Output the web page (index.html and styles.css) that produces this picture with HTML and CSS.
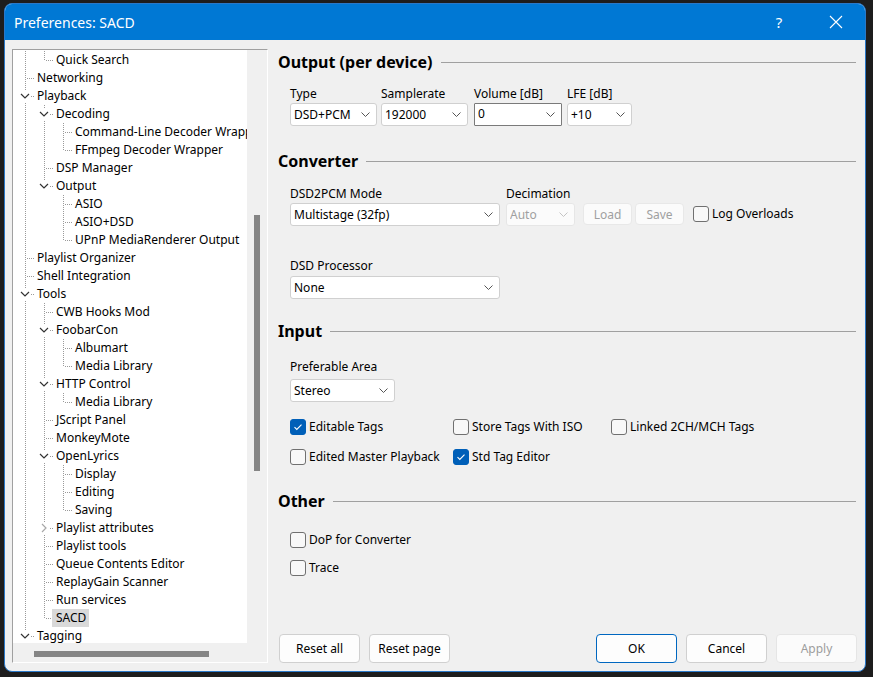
FILE: index.html
```html
<!DOCTYPE html>
<html>
<head>
<meta charset="utf-8">
<title>Preferences: SACD</title>
<link rel="stylesheet" href="styles.css">
</head>
<body>
<div class="win">
  <div class="titlebar">
    <span class="title">Preferences: SACD</span>
    <span class="cap help">?</span>
    <span class="cap close"><svg width="14" height="14" viewBox="0 0 14 14"><path d="M1 1L13 13M13 1L1 13" stroke="#fff" stroke-width="1.1" fill="none"/></svg></span>
  </div>
  <div class="body">
    <div class="panel">
      <div class="tree">
        <div class="row"><i class="g"></i><i class="c end"></i><span class="t">Quick Search</span></div>
        <div class="row"><i class="c tee"></i><span class="t">Networking</span></div>
        <div class="row"><i class="c tee"><svg class="chev" width="12" height="12" viewBox="0 0 12 12"><rect width="12" height="12" fill="#fff"/><path d="M2 4L6 8L10 4" stroke="#333" stroke-width="1.2" fill="none"/></svg></i><span class="t">Playback</span></div>
        <div class="row"><i class="g"></i><i class="c tee"><svg class="chev" width="12" height="12" viewBox="0 0 12 12"><rect width="12" height="12" fill="#fff"/><path d="M2 4L6 8L10 4" stroke="#333" stroke-width="1.2" fill="none"/></svg></i><span class="t">Decoding</span></div>
        <div class="row"><i class="g"></i><i class="g"></i><i class="c tee"></i><span class="t">Command-Line Decoder Wrapper</span></div>
        <div class="row"><i class="g"></i><i class="g"></i><i class="c end"></i><span class="t">FFmpeg Decoder Wrapper</span></div>
        <div class="row"><i class="g"></i><i class="c tee"></i><span class="t">DSP Manager</span></div>
        <div class="row"><i class="g"></i><i class="c end"><svg class="chev" width="12" height="12" viewBox="0 0 12 12"><rect width="12" height="12" fill="#fff"/><path d="M2 4L6 8L10 4" stroke="#333" stroke-width="1.2" fill="none"/></svg></i><span class="t">Output</span></div>
        <div class="row"><i class="g"></i><i class="g0"></i><i class="c tee"></i><span class="t">ASIO</span></div>
        <div class="row"><i class="g"></i><i class="g0"></i><i class="c tee"></i><span class="t">ASIO+DSD</span></div>
        <div class="row"><i class="g"></i><i class="g0"></i><i class="c end"></i><span class="t">UPnP MediaRenderer Output</span></div>
        <div class="row"><i class="c tee"></i><span class="t">Playlist Organizer</span></div>
        <div class="row"><i class="c tee"></i><span class="t">Shell Integration</span></div>
        <div class="row"><i class="c tee"><svg class="chev" width="12" height="12" viewBox="0 0 12 12"><rect width="12" height="12" fill="#fff"/><path d="M2 4L6 8L10 4" stroke="#333" stroke-width="1.2" fill="none"/></svg></i><span class="t">Tools</span></div>
        <div class="row"><i class="g"></i><i class="c tee"></i><span class="t">CWB Hooks Mod</span></div>
        <div class="row"><i class="g"></i><i class="c tee"><svg class="chev" width="12" height="12" viewBox="0 0 12 12"><rect width="12" height="12" fill="#fff"/><path d="M2 4L6 8L10 4" stroke="#333" stroke-width="1.2" fill="none"/></svg></i><span class="t">FoobarCon</span></div>
        <div class="row"><i class="g"></i><i class="g"></i><i class="c tee"></i><span class="t">Albumart</span></div>
        <div class="row"><i class="g"></i><i class="g"></i><i class="c end"></i><span class="t">Media Library</span></div>
        <div class="row"><i class="g"></i><i class="c tee"><svg class="chev" width="12" height="12" viewBox="0 0 12 12"><rect width="12" height="12" fill="#fff"/><path d="M2 4L6 8L10 4" stroke="#333" stroke-width="1.2" fill="none"/></svg></i><span class="t">HTTP Control</span></div>
        <div class="row"><i class="g"></i><i class="g"></i><i class="c end"></i><span class="t">Media Library</span></div>
        <div class="row"><i class="g"></i><i class="c tee"></i><span class="t">JScript Panel</span></div>
        <div class="row"><i class="g"></i><i class="c tee"></i><span class="t">MonkeyMote</span></div>
        <div class="row"><i class="g"></i><i class="c tee"><svg class="chev" width="12" height="12" viewBox="0 0 12 12"><rect width="12" height="12" fill="#fff"/><path d="M2 4L6 8L10 4" stroke="#333" stroke-width="1.2" fill="none"/></svg></i><span class="t">OpenLyrics</span></div>
        <div class="row"><i class="g"></i><i class="g"></i><i class="c tee"></i><span class="t">Display</span></div>
        <div class="row"><i class="g"></i><i class="g"></i><i class="c tee"></i><span class="t">Editing</span></div>
        <div class="row"><i class="g"></i><i class="g"></i><i class="c end"></i><span class="t">Saving</span></div>
        <div class="row"><i class="g"></i><i class="c tee"><svg class="chev" width="12" height="12" viewBox="0 0 12 12"><rect width="12" height="12" fill="#fff"/><path d="M4 2L8 6L4 10" stroke="#a8a8a8" stroke-width="1.2" fill="none"/></svg></i><span class="t">Playlist attributes</span></div>
        <div class="row"><i class="g"></i><i class="c tee"></i><span class="t">Playlist tools</span></div>
        <div class="row"><i class="g"></i><i class="c tee"></i><span class="t">Queue Contents Editor</span></div>
        <div class="row"><i class="g"></i><i class="c tee"></i><span class="t">ReplayGain Scanner</span></div>
        <div class="row"><i class="g"></i><i class="c tee"></i><span class="t">Run services</span></div>
        <div class="row"><i class="g"></i><i class="c end"></i><span class="t sel">SACD</span></div>
        <div class="row"><i class="c tee"><svg class="chev" width="12" height="12" viewBox="0 0 12 12"><rect width="12" height="12" fill="#fff"/><path d="M2 4L6 8L10 4" stroke="#333" stroke-width="1.2" fill="none"/></svg></i><span class="t">Tagging</span></div>
      </div>
      <div class="vs"><div class="vthumb"></div></div>
      <div class="hs"><div class="hthumb"></div></div>
      <div class="corner"></div>
    </div>

    <div class="main">
      <div class="sec-h">Output (per device)</div>
      <div class="fields out-row">
        <div class="field w-type"><div class="lbl">Type</div><div class="select"><span>DSD+PCM</span><svg class="dd" width="9" height="5" viewBox="0 0 9 5"><path d="M0.5 0.5L4.5 4.5L8.5 0.5" stroke="#555" fill="none"/></svg></div></div>
        <div class="field w-rate"><div class="lbl">Samplerate</div><div class="select"><span>192000</span><svg class="dd" width="9" height="5" viewBox="0 0 9 5"><path d="M0.5 0.5L4.5 4.5L8.5 0.5" stroke="#555" fill="none"/></svg></div></div>
        <div class="field w-vol"><div class="lbl">Volume [dB]</div><div class="select focus"><span>0</span><svg class="dd" width="9" height="5" viewBox="0 0 9 5"><path d="M0.5 0.5L4.5 4.5L8.5 0.5" stroke="#555" fill="none"/></svg></div></div>
        <div class="field w-lfe"><div class="lbl">LFE [dB]</div><div class="select"><span>+10</span><svg class="dd" width="9" height="5" viewBox="0 0 9 5"><path d="M0.5 0.5L4.5 4.5L8.5 0.5" stroke="#555" fill="none"/></svg></div></div>
      </div>

      <div class="sec-h sec-conv">Converter</div>
      <div class="fields conv-row">
        <div class="field w-mode"><div class="lbl">DSD2PCM Mode</div><div class="select"><span>Multistage (32fp)</span><svg class="dd" width="9" height="5" viewBox="0 0 9 5"><path d="M0.5 0.5L4.5 4.5L8.5 0.5" stroke="#555" fill="none"/></svg></div></div>
        <div class="field w-dec"><div class="lbl">Decimation</div><div class="select disabled"><span>Auto</span><svg class="dd" width="9" height="5" viewBox="0 0 9 5"><path d="M0.5 0.5L4.5 4.5L8.5 0.5" stroke="#c4c4c4" fill="none"/></svg></div></div>
        <div class="sbtn load">Load</div>
        <div class="sbtn save">Save</div>
        <label class="chk log"><span class="box"></span>Log Overloads</label>
      </div>
      <div class="fields proc-row">
        <div class="field w-mode"><div class="lbl">DSD Processor</div><div class="select"><span>None</span><svg class="dd" width="9" height="5" viewBox="0 0 9 5"><path d="M0.5 0.5L4.5 4.5L8.5 0.5" stroke="#555" fill="none"/></svg></div></div>
      </div>

      <div class="sec-h sec-input">Input</div>
      <div class="fields area-row">
        <div class="field w-area"><div class="lbl">Preferable Area</div><div class="select"><span>Stereo</span><svg class="dd" width="9" height="5" viewBox="0 0 9 5"><path d="M0.5 0.5L4.5 4.5L8.5 0.5" stroke="#555" fill="none"/></svg></div></div>
      </div>
      <div class="chk-grid">
        <label class="chk"><span class="box on"><svg width="14" height="14" viewBox="0 0 14 14"><path d="M3.5 7.2L5.8 9.5L10.5 4.6" stroke="#fff" stroke-width="1.1" fill="none"/></svg></span>Editable Tags</label>
        <label class="chk"><span class="box"></span>Store Tags With ISO</label>
        <label class="chk"><span class="box"></span>Linked 2CH/MCH Tags</label>
        <label class="chk"><span class="box"></span>Edited Master Playback</label>
        <label class="chk"><span class="box on"><svg width="14" height="14" viewBox="0 0 14 14"><path d="M3.5 7.2L5.8 9.5L10.5 4.6" stroke="#fff" stroke-width="1.1" fill="none"/></svg></span>Std Tag Editor</label>
      </div>

      <div class="sec-h sec-other">Other</div>
      <div class="other-list">
        <label class="chk"><span class="box"></span>DoP for Converter</label>
        <label class="chk"><span class="box"></span>Trace</label>
      </div>

      <div class="footer">
        <div class="btn">Reset all</div>
        <div class="btn">Reset page</div>
        <div class="spacer"></div>
        <div class="btn default">OK</div>
        <div class="btn">Cancel</div>
        <div class="btn disabled">Apply</div>
      </div>
    </div>
  </div>
</div>
</body>
</html>
```
FILE: styles.css
```css
html, body {
  margin: 0;
  width: 873px;
  height: 677px;
  overflow: hidden;
  background: #1d1d1d;
}
body {
  box-sizing: border-box;
  padding: 3px 0 0 4px;
  font-family: "Noto Sans", "Open Sans", sans-serif;
  font-size: 12px;
  color: #000;
}
.win {
  width: 862px;
  height: 669px;
  box-sizing: border-box;
  border: 1px solid #2a78c8;
  border-radius: 8px;
  background: #f0f0f0;
  overflow: hidden;
  display: flex;
  flex-direction: column;
}
.titlebar {
  height: 36px;
  flex: none;
  background: #0078d4;
  color: #fff;
  display: flex;
  align-items: center;
  padding-left: 9px;
}
.title { font-size: 14px; }
.cap {
  width: 46px;
  height: 36px;
  display: flex;
  align-items: center;
  justify-content: center;
}
.help { margin-left: auto; margin-right: 11px; font-size: 15px; }
.close { margin-right: 6px; }

.body {
  flex: 1;
  display: flex;
  gap: 10px;
  padding: 9px 8px 8px 7px;
  min-height: 0;
}

/* tree panel */
.panel {
  width: 256px;
  flex: none;
  box-sizing: border-box;
  border: 1px solid;
  border-color: #a0a0a0 #ffffff #ffffff #a0a0a0;
  display: grid;
  grid-template-columns: 234px 20px;
  grid-template-rows: 593px 19px;
}
.tree {
  background: #fff;
  overflow: hidden;
  padding-top: 1px;
}
.row {
  display: flex;
  align-items: center;
  height: 18px;
  padding-left: 3px;
  white-space: nowrap;
}
.g, .g0, .c {
  display: block;
  width: 19px;
  height: 18px;
  flex: none;
}
.g {
  background: repeating-linear-gradient(to bottom, #9a9a9a 0 1px, transparent 1px 2px) 9px 0 / 1px 18px no-repeat;
}
.c.tee {
  background:
    repeating-linear-gradient(to bottom, #9a9a9a 0 1px, transparent 1px 2px) 9px 0 / 1px 18px no-repeat,
    repeating-linear-gradient(to right, #9a9a9a 0 1px, transparent 1px 2px) 11px 9px / 8px 1px no-repeat;
}
.c.end {
  background:
    repeating-linear-gradient(to bottom, #9a9a9a 0 1px, transparent 1px 2px) 9px 0 / 1px 10px no-repeat,
    repeating-linear-gradient(to right, #9a9a9a 0 1px, transparent 1px 2px) 11px 9px / 8px 1px no-repeat;
}
.chev { display: block; margin: 3px 0 0 3px; }
.t {
  padding: 0 2px;
  line-height: 18px;
}
.t.sel {
  background: #d9d9d9;
  margin-left: -2px;
  padding: 0 3px 0 4px;
}
.vs { background: #f0f0f0; }
.vthumb {
  margin: 165px 0 0 7px;
  width: 6px;
  height: 256px;
  background: #858585;
}
.hs { background: #f0f0f0; }
.hthumb {
  margin: 8px 0 0 21px;
  width: 175px;
  height: 6px;
  background: #858585;
}
.corner { background: #f0f0f0; }

/* main */
.main {
  flex: 1;
  display: flex;
  flex-direction: column;
  padding-top: 2px;
  min-width: 0;
}
.sec-h {
  display: flex;
  align-items: center;
  height: 22px;
  font-size: 16px;
  font-weight: bold;
  color: #000;
}
.sec-h::after {
  content: "";
  flex: 1;
  height: 1px;
  background: #a0a0a0;
  margin-left: 8px;
  margin-right: 1px;
}
.fields {
  display: flex;
  padding-left: 12px;
  align-items: flex-end;
}
.lbl {
  line-height: 16px;
  padding-top: 1px;
  margin-bottom: 1px;
}
.select {
  box-sizing: border-box;
  height: 23px;
  background: #fff;
  border: 1px solid #d0d0d0;
  border-radius: 3px;
  display: flex;
  align-items: center;
  padding: 0 6px 0 3px;
}
.select span { flex: 1; white-space: nowrap; overflow: hidden; }
.select .dd { flex: none; }
.select.focus { border-color: #7a7a7a; border-radius: 1px; }
.select.focus span { margin-top: -2px; }
.select.disabled { background: #fbfbfb; border-color: #e6e6e6; color: #a0a0a0; }

.out-row { margin-top: 12px; }
.w-type { width: 87px; margin-right: 4px; }
.w-rate { width: 87px; margin-right: 6px; }
.w-vol { width: 88px; margin-right: 5px; }
.w-lfe { width: 65px; }

.sec-conv { margin-top: 24px; }
.conv-row { margin-top: 13px; }
.w-mode { width: 210px; margin-right: 6px; }
.w-dec { width: 69px; margin-right: 8px; }
.sbtn {
  box-sizing: border-box;
  width: 49px;
  height: 22px;
  margin-bottom: 1px;
  background: #fbfbfb;
  border: 1px solid #e8e8e8;
  border-radius: 4px;
  color: #a0a0a0;
  display: flex;
  align-items: center;
  justify-content: center;
}
.load { margin-right: 3px; }
.save { margin-right: 9px; }
.chk {
  display: flex;
  align-items: center;
  white-space: nowrap;
  height: 16px;
  line-height: 16px;
}
.box {
  box-sizing: border-box;
  width: 16px;
  height: 16px;
  border: 1px solid #707070;
  border-radius: 3px;
  background: #f8f8f8;
  margin-right: 3px;
  flex: none;
  display: flex;
  align-items: center;
  justify-content: center;
}
.box.on { background: #005fb8; border-color: #005fb8; }
.log { margin-bottom: 4px; }

.proc-row { margin-top: 31px; }
.proc-row .lbl { margin-bottom: 2px; }

.sec-input { margin-top: 21px; }
.area-row { margin-top: 16px; }
.area-row .lbl { margin-bottom: 4px; }
.w-area { width: 105px; }

.chk-grid {
  display: grid;
  grid-template-columns: 163px 158px auto;
  row-gap: 14px;
  padding-left: 12px;
  margin-top: 17px;
}

.sec-other { margin-top: 25px; }
.other-list {
  display: flex;
  flex-direction: column;
  gap: 12px;
  padding-left: 12px;
  margin-top: 20px;
}

.footer {
  margin-top: auto;
  display: flex;
  gap: 9px;
  padding-left: 1px;
}
.spacer { flex: 1; }
.btn {
  box-sizing: border-box;
  width: 81px;
  height: 29px;
  background: #fdfdfd;
  border: 1px solid #d0d0d0;
  border-radius: 4px;
  display: flex;
  align-items: center;
  justify-content: center;
}
.btn.default { border-color: #0067c0; }
.btn.disabled { background: #fbfbfb; border-color: #e5e5e5; color: #9d9d9d; }
```
